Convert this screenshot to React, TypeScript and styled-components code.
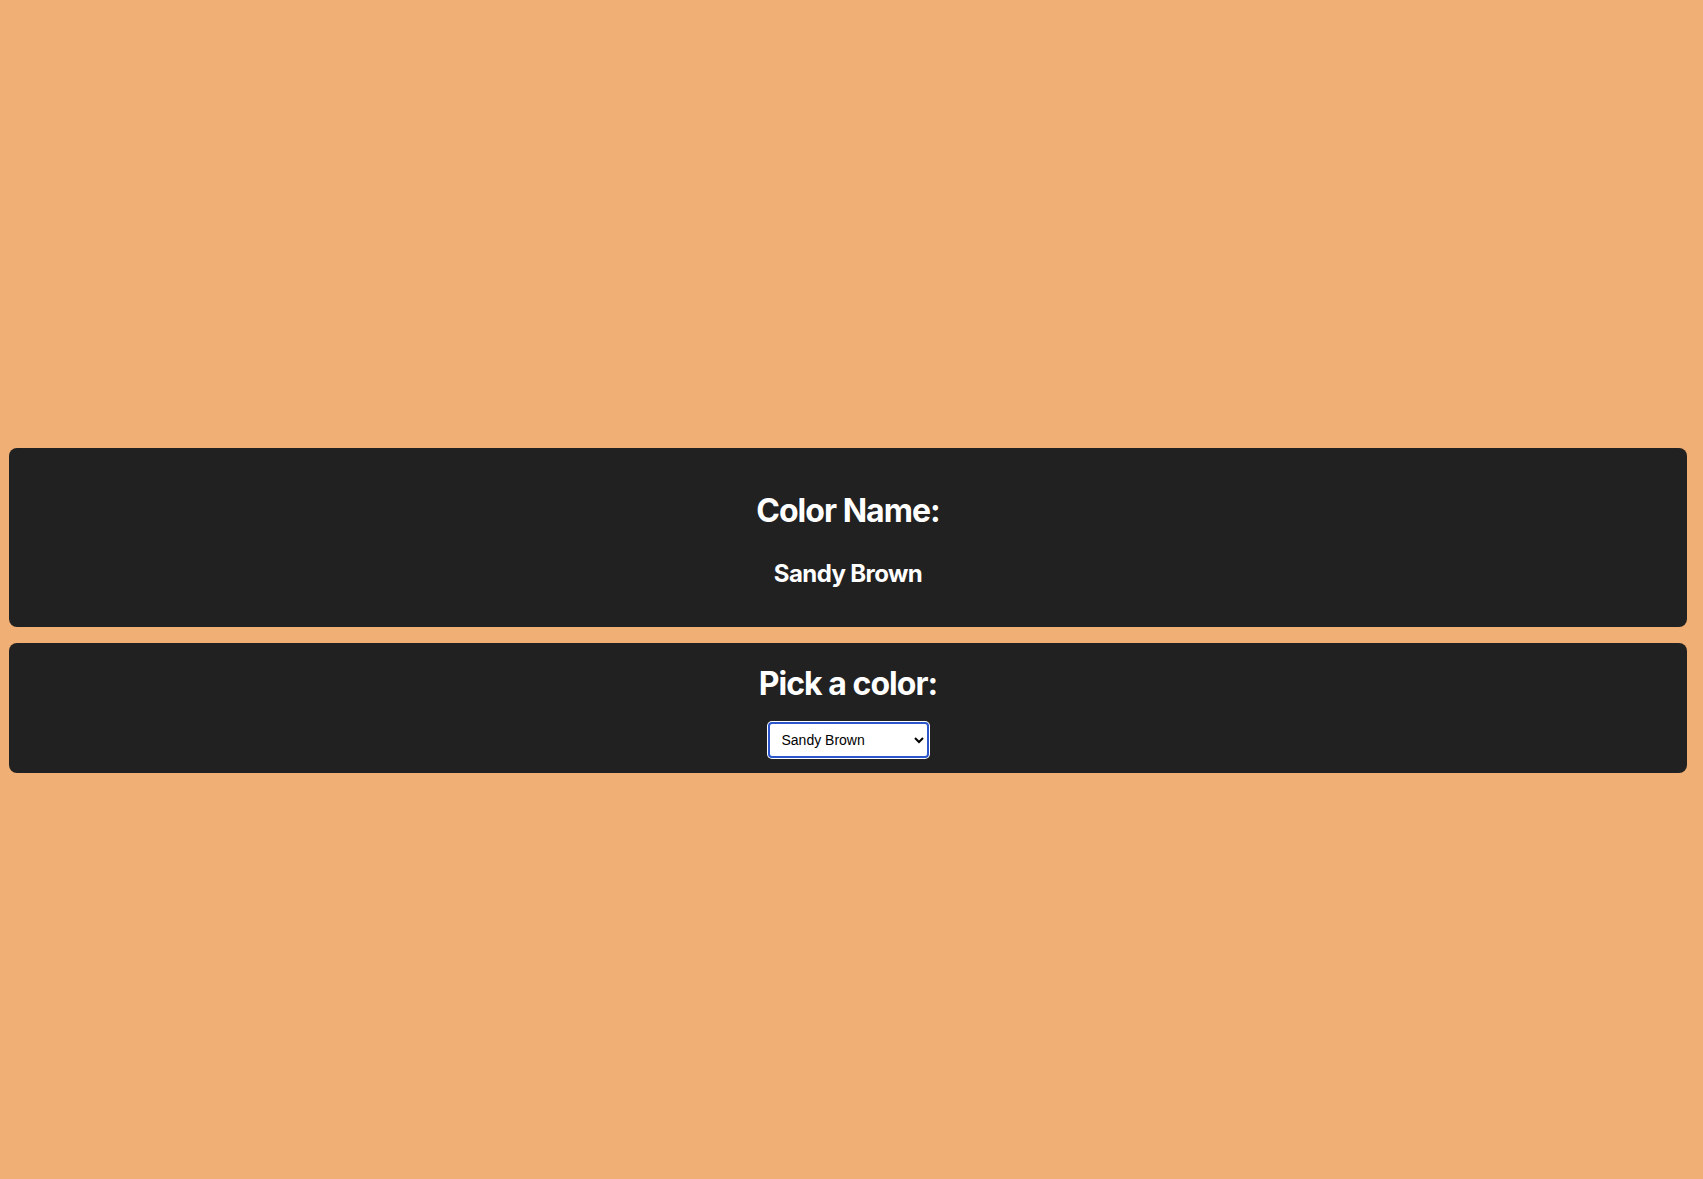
import React, { useState } from "react";
import styled, { createGlobalStyle } from "styled-components";

const GlobalStyle = createGlobalStyle`
  html, body {
    margin: 0;
    padding: 0;
    background: #f0af75;
  }
  body {
    font-family: Inter, "Noto Sans", "Liberation Sans", sans-serif;
    line-height: 1.5;
    color: #ffffff;
  }
  * {
    box-sizing: border-box;
  }
`;

const Page = styled.div`
  min-height: 100vh;
  display: flex;
  flex-direction: column;
  justify-content: center;
  gap: 16px;
  padding: 42px 16px 0 9px;
  background: #f0af75;
`;

const Card = styled.section`
  background: #212121;
  border-radius: 8px;
  padding: 17px 16px 15px;
  text-align: center;
`;

const Title = styled.h1<{ $flush?: boolean }>`
  font-size: 32px;
  font-weight: 700;
  letter-spacing: -0.03em;
  margin: ${(p) => (p.$flush ? "0 0 14px" : "21.44px 0")};
`;

const ColorName = styled.h2`
  font-size: 24px;
  font-weight: 700;
  letter-spacing: -0.025em;
  margin: 19.92px 0;
`;

const Picker = styled.select`
  width: 161px;
  height: 36px;
  padding: 0 6px 0 8px;
  font-family: "Liberation Sans", Arial, sans-serif;
  font-size: 14px;
  color: #000;
  background: #ffffff;
  border: 2px solid #2c55c9;
  border-radius: 4px;
  box-shadow: 0 0 0 1px #ffffff;
  outline: none;
  display: block;
  margin: 0 auto;
`;

const colors = [
  { name: "Sandy Brown", value: "#f4a460" },
  { name: "Tomato", value: "#ff6347" },
  { name: "Steel Blue", value: "#4682b4" },
  { name: "Sea Green", value: "#2e8b57" },
  { name: "Orchid", value: "#da70d6" },
];

export default function App() {
  const [color, setColor] = useState("Sandy Brown");

  return (
    <>
      <GlobalStyle />
      <Page>
        <Card>
          <Title>Color Name:</Title>
          <ColorName>{color}</ColorName>
        </Card>
        <Card>
          <Title $flush>Pick a color:</Title>
          <Picker value={color} onChange={(e) => setColor(e.target.value)}>
            {colors.map((c) => (
              <option key={c.name} value={c.name}>
                {c.name}
              </option>
            ))}
          </Picker>
        </Card>
      </Page>
    </>
  );
}
